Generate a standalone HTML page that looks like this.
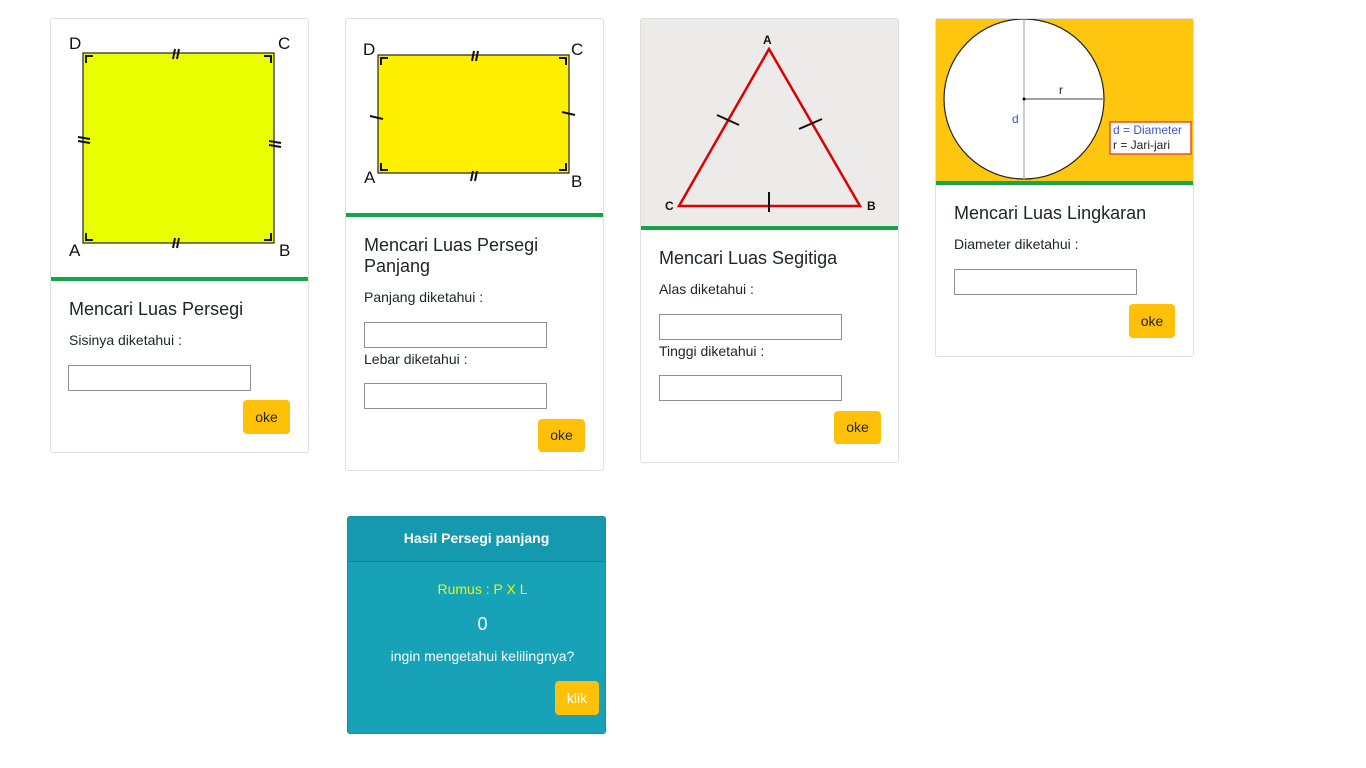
<!DOCTYPE html>
<html><head><meta charset="utf-8"><style>
*{box-sizing:border-box}
body{margin:0;width:1366px;height:768px;background:#fff;font-family:"Liberation Sans",sans-serif;color:#212529;position:relative;overflow:hidden}
.card{position:absolute;border:1px solid #dfdfdf;border-radius:3px;background:#fff}
.img{position:absolute;left:0;top:0;width:257px;border-bottom:4px solid #16a44a}
.t{position:absolute;font-size:18px;color:#212529}
.l{position:absolute;font-size:14px}
.in{position:absolute;width:183px;height:26px;border:1px solid #8f8f8f;background:#fff}
.btn{position:absolute;background:#ffc107;border-radius:4px;font-size:14px;text-align:center;color:#212529}
</style></head><body>

<div class="card" style="left:50px;top:18px;width:259px;height:435px">
 <div class="img" style="height:262px">
  <svg width="257" height="258" style="position:absolute;left:0;top:0">
   <rect x="32" y="34" width="191" height="190" fill="#e9ff00" stroke="#222" stroke-width="1.2"/>
   <g stroke="#111" stroke-width="2" fill="none">
    <path d="M35 44V37h7M220 44V37h-7M35 214v7h7M220 214v7h-7"/>
    <path d="M122 40l2-10M126 40l2-10M122 229l2-10M126 229l2-10M27 118l12 2M27 122l12 2M218 122l12 2M218 126l12 2"/>
   </g>
   <g font-size="17" fill="#111"><text x="18" y="30">D</text><text x="227" y="30">C</text><text x="18" y="237">A</text><text x="228" y="237">B</text></g>
  </svg>
 </div>
 <div class="t" style="left:18px;top:280px">Mencari Luas Persegi</div>
 <div class="l" style="left:18px;top:313px">Sisinya diketahui :</div>
 <div class="in" style="left:17px;top:346px"></div>
 <div class="btn" style="left:192px;top:381px;width:47px;height:34px;line-height:34px">oke</div>
</div>

<div class="card" style="left:345px;top:18px;width:259px;height:453px">
 <div class="img" style="height:198px">
  <svg width="257" height="194" style="position:absolute;left:0;top:0">
   <rect x="32" y="36" width="191" height="118" fill="#fff000" stroke="#222" stroke-width="1.2"/>
   <g stroke="#111" stroke-width="2" fill="none">
    <path d="M35 46V39h7M220 46V39h-7M35 144v7h7M220 144v7h-7"/>
    <path d="M126 42l2-10M130 42l2-10M125 162l2-10M129 162l2-10M24 97l13 3M216 93l13 3"/>
   </g>
   <g font-size="17" fill="#111"><text x="17" y="36">D</text><text x="225" y="36">C</text><text x="18" y="164">A</text><text x="225" y="168">B</text></g>
  </svg>
 </div>
 <div class="t" style="left:18px;top:216px;line-height:21px">Mencari Luas Persegi<br>Panjang</div>
 <div class="l" style="left:18px;top:270px">Panjang diketahui :</div>
 <div class="in" style="left:18px;top:303px"></div>
 <div class="l" style="left:18px;top:332px">Lebar diketahui :</div>
 <div class="in" style="left:18px;top:364px"></div>
 <div class="btn" style="left:192px;top:400px;width:47px;height:33px;line-height:33px">oke</div>
</div>

<div class="card" style="left:640px;top:18px;width:259px;height:445px">
 <div class="img" style="height:211px;background:#ecebea">
  <svg width="257" height="207" style="position:absolute;left:0;top:0">
   <path d="M128 30L38 187H219Z" fill="none" stroke="#dd0000" stroke-width="2.5"/>
   <g stroke="#111" stroke-width="2"><path d="M76 96l22 10M158 110l23-10M128 173v20"/></g>
   <g font-size="12" font-weight="bold" fill="#111"><text x="122" y="25">A</text><text x="24" y="191">C</text><text x="226" y="191">B</text></g>
  </svg>
 </div>
 <div class="t" style="left:18px;top:229px">Mencari Luas Segitiga</div>
 <div class="l" style="left:18px;top:262px">Alas diketahui :</div>
 <div class="in" style="left:18px;top:295px"></div>
 <div class="l" style="left:18px;top:324px">Tinggi diketahui :</div>
 <div class="in" style="left:18px;top:356px"></div>
 <div class="btn" style="left:193px;top:392px;width:47px;height:33px;line-height:33px">oke</div>
</div>

<div class="card" style="left:935px;top:18px;width:259px;height:339px">
 <div class="img" style="height:166px;background:#fec60e">
  <svg width="257" height="162" style="position:absolute;left:0;top:0">
   <circle cx="88" cy="80" r="80" fill="#fff" stroke="#222" stroke-width="1.2"/>
   <line x1="88" y1="0" x2="88" y2="161" stroke="#99a"/>
   <line x1="88" y1="80" x2="167" y2="80" stroke="#444"/>
   <circle cx="88" cy="80" r="1.5" fill="#000"/>
   <text x="123" y="75" font-size="12" fill="#222">r</text>
   <text x="76" y="104" font-size="12" fill="#4455cc">d</text>
   <rect x="174" y="103" width="81" height="32" fill="#fff" stroke="#e9502a" stroke-width="1.5"/>
   <text x="177" y="115" font-size="12" fill="#4455cc">d = Diameter</text>
   <text x="177" y="130" font-size="12" fill="#222">r = Jari-jari</text>
  </svg>
 </div>
 <div class="t" style="left:18px;top:184px">Mencari Luas Lingkaran</div>
 <div class="l" style="left:18px;top:217px">Diameter diketahui :</div>
 <div class="in" style="left:18px;top:250px"></div>
 <div class="btn" style="left:193px;top:285px;width:46px;height:34px;line-height:34px">oke</div>
</div>

<div style="position:absolute;left:347px;top:516px;width:259px;height:218px;background:#17a2b8;border:1px solid #148ea1;border-radius:3px;color:#fff">
 <div style="height:45px;background:#1599ae;border-bottom:1px solid #128699;text-align:center;line-height:43px;font-weight:bold;font-size:14px">Hasil Persegi panjang</div>
 <div style="position:absolute;left:12px;right:0;top:64px;text-align:center;font-size:14px;color:#e9f700">Rumus : P X L</div>
 <div style="position:absolute;left:12px;right:0;top:97px;text-align:center;font-size:18px">0</div>
 <div style="position:absolute;left:12px;right:0;top:131px;text-align:center;font-size:14px">ingin mengetahui kelilingnya?</div>
 <div class="btn" style="left:207px;top:164px;width:44px;height:34px;line-height:34px;color:#fff">klik</div>
</div>
</body></html>
